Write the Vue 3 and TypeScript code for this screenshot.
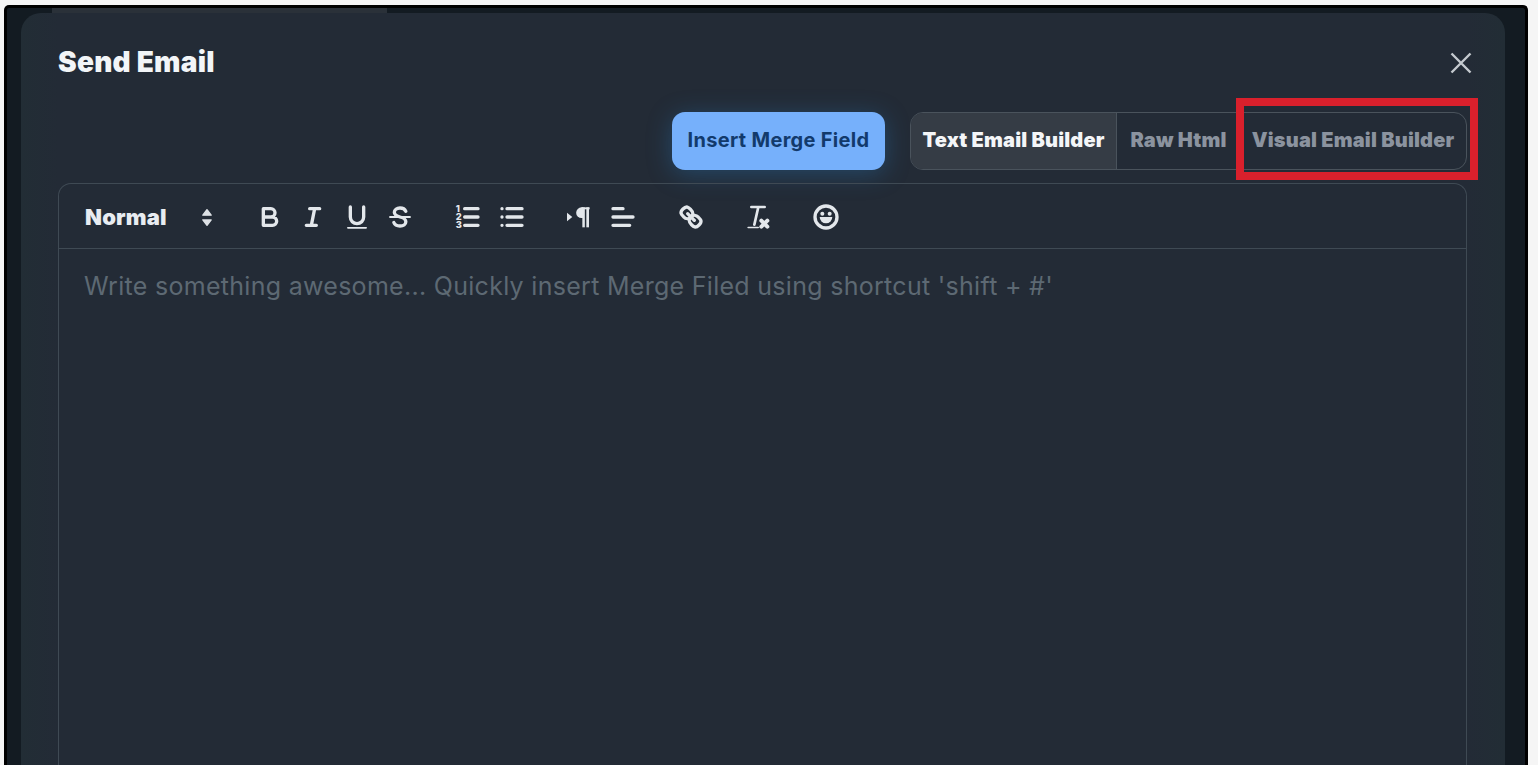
<template>
  <div class="page">
    <div class="frame">
      <div class="strip"></div>
      <section class="modal">
        <header class="modal-head">
          <h1 class="title">Send Email</h1>
          <button class="close" aria-label="Close">
            <svg viewBox="0 0 22 22" width="22" height="22">
              <path d="M1.5 1.5 20.5 20.5M20.5 1.5 1.5 20.5" />
            </svg>
          </button>
        </header>

        <div class="actions">
          <button class="merge-btn">Insert Merge Field</button>
          <div class="tabs">
            <button
              v-for="tab in tabs"
              :key="tab.label"
              class="tab"
              :class="[tab.cls, { active: tab.active }]"
            >
              {{ tab.label }}
              <span v-if="tab.marked" class="marker"></span>
            </button>
          </div>
        </div>

        <div class="editor">
          <div class="toolbar">
            <div class="heading">
              <span>Normal</span>
              <svg viewBox="0 0 10 16" width="12" height="19" class="updown">
                <path d="M5 1.5 8.5 6H1.5ZM5 14.5 1.5 10H8.5Z" />
              </svg>
            </div>

            <div class="group">
              <button class="tool">
                <svg viewBox="0 0 18 18">
                  <path d="M5 4H9.5A2.5 2.5 0 0 1 12 6.5 2.5 2.5 0 0 1 9.5 9H5ZM5 9H10.5A2.5 2.5 0 0 1 13 11.5 2.5 2.5 0 0 1 10.5 14H5Z" />
                </svg>
              </button>
              <button class="tool">
                <svg viewBox="0 0 18 18">
                  <path d="M7 4H13M5 14H11M8 14 10 4" />
                </svg>
              </button>
              <button class="tool">
                <svg viewBox="0 0 18 18">
                  <path d="M5 3V9A4 4 0 0 0 9 13 4 4 0 0 0 13 9V3" />
                  <rect class="fill" x="3" y="15" width="12" height="1" rx=".5" />
                </svg>
              </button>
              <button class="tool">
                <svg viewBox="0 0 18 18">
                  <path class="thin" d="M3 9H15" />
                  <path d="M12.5 5.6C12 4.4 10.8 3.6 9 3.6 7 3.6 5.6 4.7 5.6 6.2 5.6 7.8 7 8.5 9 9 11 9.5 12.5 10.2 12.5 11.8 12.5 13.4 11 14.4 9 14.4 7.1 14.4 5.8 13.6 5.3 12.3" />
                </svg>
              </button>
            </div>

            <div class="group">
              <button class="tool">
                <svg viewBox="0 0 18 18">
                  <path d="M7 4H15M7 9H15M7 14H15" />
                  <text class="num" x="1.6" y="5.8">1</text>
                  <text class="num" x="1.6" y="10.8">2</text>
                  <text class="num" x="1.6" y="15.8">3</text>
                </svg>
              </button>
              <button class="tool">
                <svg viewBox="0 0 18 18">
                  <path d="M6 4H15M6 9H15M6 14H15M3 4H3M3 9H3M3 14H3" />
                </svg>
              </button>
            </div>

            <div class="group">
              <button class="tool">
                <svg viewBox="0 0 18 18">
                  <path class="fill" d="M1.8 11.6 5 9 1.8 6.4Z" />
                  <path class="fill" d="M10.5 3.2A3.2 3.2 0 0 0 10.5 9.6H11.4V3.2Z" />
                  <rect class="fill" x="11" y="3.2" width="1.5" height="12" />
                  <rect class="fill" x="13.4" y="3.2" width="1.6" height="12" />
                  <path class="fill" d="M10.5 3.2H15.4V4.4H10.5Z" />
                </svg>
              </button>
              <button class="tool">
                <svg viewBox="0 0 18 18">
                  <path d="M3 4H9M3 9H15M3 14H13" />
                </svg>
              </button>
            </div>

            <div class="group">
              <button class="tool">
                <svg viewBox="0 0 18 18">
                  <path d="M7 7 11 11" />
                  <path d="M8.9 4.6A3.5 3.5 0 0 1 9.3 9.3 3.5 3.5 0 0 1 4.6 8.9C3.2 7.5 2 6.4 4.2 4.2S7.5 3.2 8.9 4.6Z" />
                  <path d="M13.4 9.1A3.5 3.5 0 0 0 8.7 8.7 3.5 3.5 0 0 0 9.1 13.4C10.5 14.8 11.6 16 13.8 13.8S14.8 10.5 13.4 9.1Z" />
                </svg>
              </button>
            </div>

            <div class="group">
              <button class="tool">
                <svg viewBox="0 0 18 18">
                  <path class="mid" d="M5 3H13M9.2 3 6.8 13.6" />
                  <path class="bold" d="M11 11.2 14.6 14.8M14.6 11.2 11 14.8" />
                  <rect class="fill" x="2.6" y="14.8" width="7" height="1" rx=".5" />
                </svg>
              </button>
            </div>

            <div class="group">
              <button class="tool">
                <svg viewBox="0 0 18 18">
                  <circle cx="9" cy="9" r="6.6" />
                  <circle class="fill" cx="6.8" cy="7" r="1.2" />
                  <circle class="fill" cx="11.2" cy="7" r="1.2" />
                  <path class="fill" d="M5.2 9H12.8A3.8 3.8 0 0 1 5.2 9Z" />
                </svg>
              </button>
            </div>
          </div>

          <div class="body">
            <p class="placeholder">Write something awesome... Quickly insert Merge Filed using shortcut 'shift + #'</p>
          </div>
        </div>
      </section>
    </div>
  </div>
</template>

<script setup lang="ts">
interface Tab {
  label: string
  cls: string
  active?: boolean
  marked?: boolean
}

const tabs: Tab[] = [
  { label: 'Text Email Builder', cls: 'tab-text', active: true },
  { label: 'Raw Html', cls: 'tab-raw' },
  { label: 'Visual Email Builder', cls: 'tab-visual', marked: true }
]
</script>

<style>
html,
body {
  margin: 0;
  background: #f5f5f5;
}
</style>

<style scoped>
.page {
  box-sizing: border-box;
  height: 765px;
  padding: 5px 10px 0 4px;
  overflow: hidden;
  font-family: Inter, "Noto Sans", sans-serif;
}
.frame {
  box-sizing: border-box;
  height: 100%;
  display: flex;
  flex-direction: column;
  padding: 0 20px 0 14px;
  background: #131b22;
  border: 3px solid #000;
  border-bottom: 0;
  border-radius: 5px 5px 0 0;
}
.strip {
  flex: none;
  width: 335px;
  height: 5px;
  margin-left: 31px;
  background: #2a3139;
}
.modal {
  flex: 1;
  min-height: 0;
  box-sizing: border-box;
  padding: 0 38px 0 37px;
  background: linear-gradient(90deg, #222d35 0, #232b36 37px, #232b36 calc(100% - 38px), #222d35 100%);
  border-radius: 20px 20px 0 0;
  display: flex;
  flex-direction: column;
}
.modal-head {
  height: 99px;
  flex: none;
  display: flex;
  justify-content: space-between;
  align-items: flex-start;
}
.title {
  margin: 33px 0 0;
  font-size: 28px;
  line-height: 33px;
  font-weight: 900;
  letter-spacing: 0.25px;
  color: #f2f5f8;
}
button {
  font-family: inherit;
  border: 0;
  padding: 0;
  background: none;
}
.close {
  margin: 39px -5px 0 0;
  width: 22px;
  height: 22px;
}
.close svg {
  display: block;
  fill: none;
  stroke: #c5cacf;
  stroke-width: 2.4;
}
.actions {
  flex: none;
  display: flex;
  justify-content: flex-end;
  gap: 25px;
  height: 58px;
}
.merge-btn {
  width: 213px;
  height: 58px;
  padding-bottom: 2px;
  border-radius: 13px;
  background: #76b0fb;
  color: #123a6c;
  font-size: 20px;
  font-weight: 700;
  letter-spacing: 0.3px;
  box-shadow: 0 4px 24px rgba(40, 130, 200, 0.35);
}
.tabs {
  display: flex;
  height: 58px;
  box-sizing: border-box;
  border: 1px solid #4a535c;
  border-radius: 13px;
}
.tab {
  position: relative;
  height: 100%;
  padding-bottom: 2px;
  font-size: 20px;
  font-weight: 900;
  letter-spacing: 0.17px;
  color: #8b939f;
  white-space: nowrap;
}
.tab-text {
  width: 206px;
  border-right: 1px solid #4a535c;
  border-radius: 12px 0 0 12px;
}
.tab-raw {
  width: 123px;
}
.tab-visual {
  width: 226px;
  border-radius: 0 12px 12px 0;
}
.tab.active {
  background: #353c45;
  color: #f4f6f8;
}
/* red annotation box drawn over the screenshot */
.marker {
  position: absolute;
  left: -4px;
  top: -15px;
  width: 242px;
  height: 82px;
  box-sizing: border-box;
  border: 8px solid #d9202c;
  pointer-events: none;
}
.editor {
  flex: 1;
  margin-top: 13px;
  display: flex;
  flex-direction: column;
  border: 1px solid #3f4a54;
  border-bottom: 0;
  border-radius: 13px 13px 0 0;
  min-height: 0;
}
.toolbar {
  flex: none;
  height: 65px;
  box-sizing: border-box;
  display: flex;
  align-items: center;
  padding: 2px 0 0 26px;
  border-bottom: 1px solid #3f4a54;
}
.heading {
  width: 163px;
  flex: none;
  display: flex;
  align-items: center;
  gap: 34px;
  font-size: 22px;
  font-weight: 900;
  letter-spacing: 0.2px;
  color: #e8ecf1;
}
.updown {
  fill: #dde1e5;
  stroke: #dde1e5;
  stroke-width: 1.2;
  stroke-linejoin: round;
}
.group {
  display: flex;
  margin-right: 24.3px;
}
.tool {
  width: 43.5px;
  height: 30px;
  display: flex;
  justify-content: center;
}
.tool svg {
  width: 30px;
  height: 30px;
  fill: none;
  stroke: #e3e7eb;
  stroke-width: 2;
  stroke-linecap: round;
  stroke-linejoin: round;
}
.tool .thin {
  stroke-width: 1.1;
}
.tool .mid {
  stroke-width: 1.6;
}
.tool .bold {
  stroke-width: 2.4;
}
.tool .fill {
  fill: #e3e7eb;
  stroke: none;
}
.tool .num {
  font-size: 5.6px;
  font-weight: 800;
  fill: #e3e7eb;
  stroke: none;
}
.body {
  flex: 1;
  padding: 20px 25px;
}
.placeholder {
  margin: 0;
  font-size: 25px;
  line-height: 34px;
  letter-spacing: 0.29px;
  color: #5d6973;
  white-space: nowrap;
}
</style>
